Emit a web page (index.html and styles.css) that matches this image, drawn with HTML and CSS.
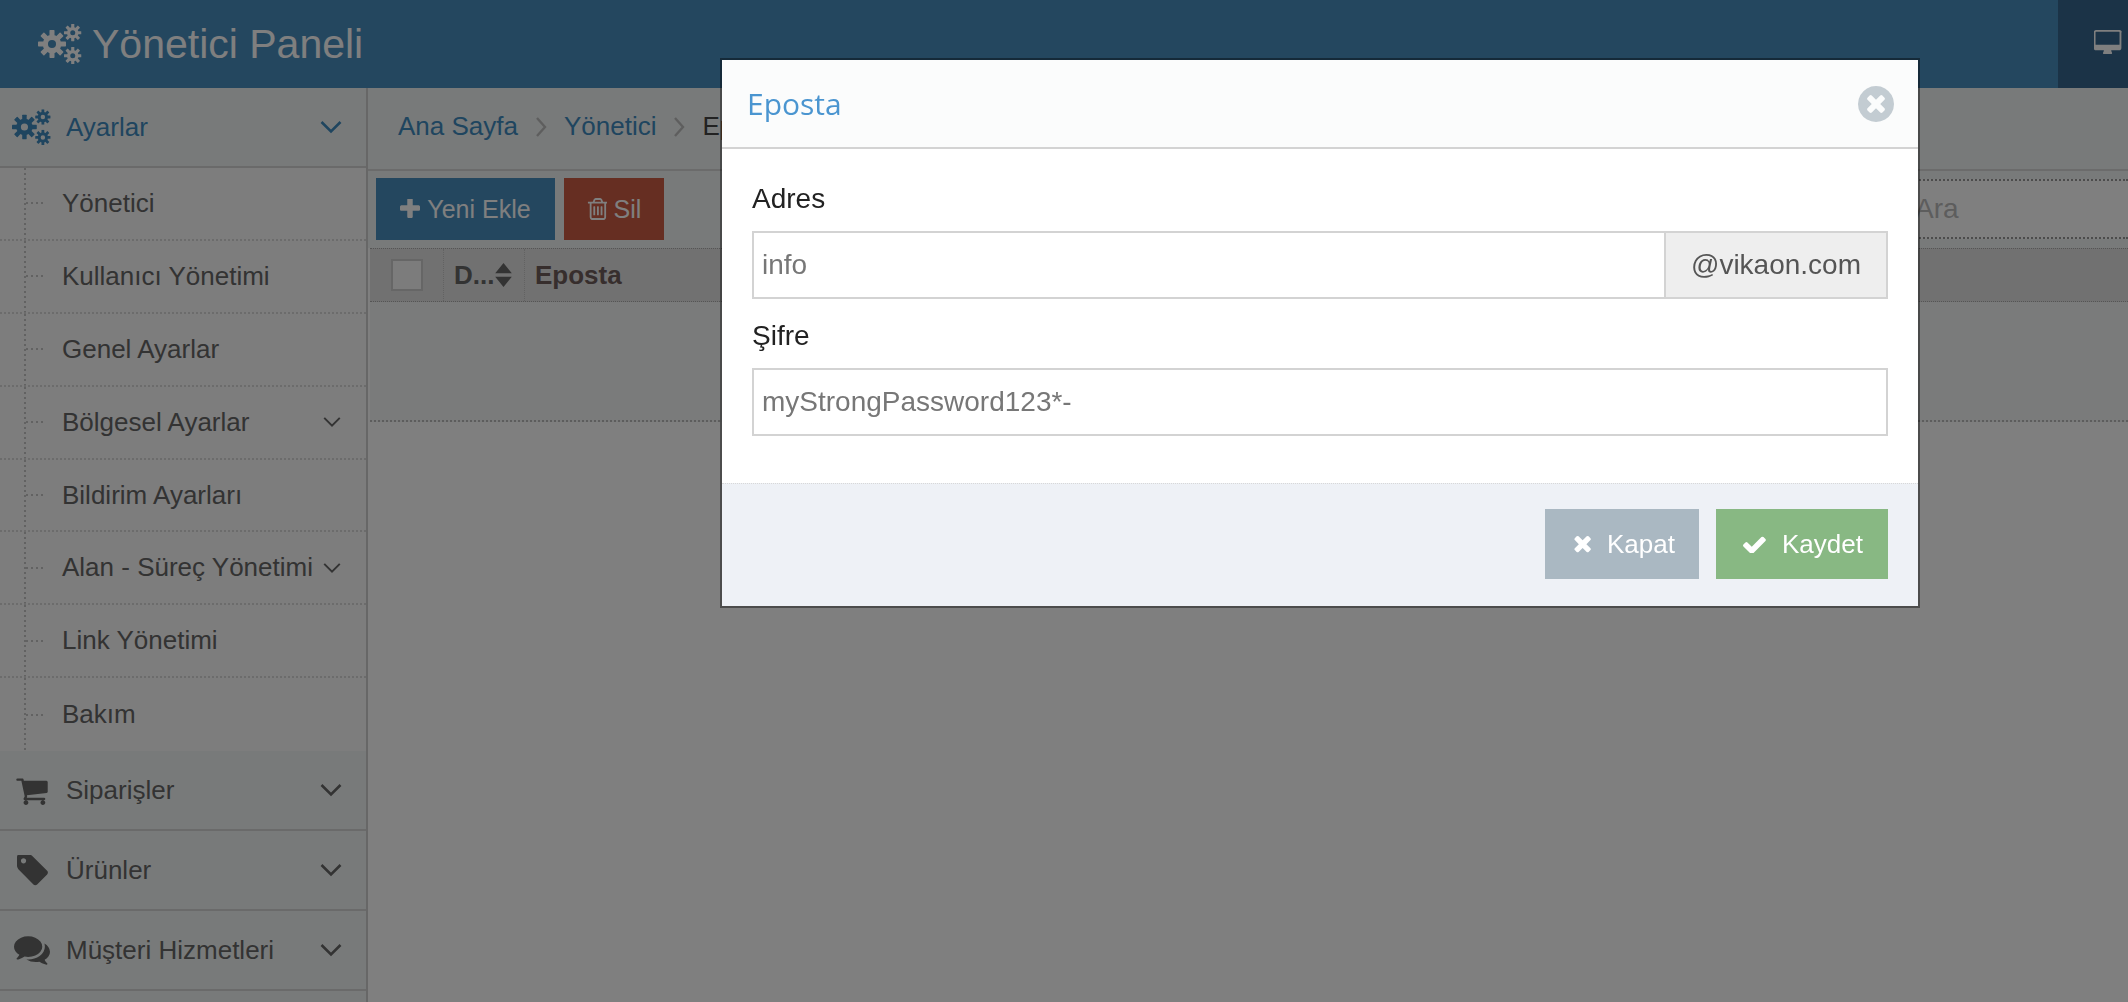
FILE: index.html
```html
<!DOCTYPE html>
<html lang="tr">
<head>
<meta charset="utf-8">
<title>Yönetici Paneli</title>
<link rel="stylesheet" href="styles.css">
</head>
<body>
<svg class="defs" aria-hidden="true">
  <defs>
    <symbol id="gear" viewBox="-20 -20 40 40">
      <circle class="gear-ring" r="9.5"/>
      <g class="gear-teeth">
        <rect x="-3.6" y="-20" width="7.2" height="9" rx="1"/>
        <rect x="-3.6" y="-20" width="7.2" height="9" rx="1" transform="rotate(45)"/>
        <rect x="-3.6" y="-20" width="7.2" height="9" rx="1" transform="rotate(90)"/>
        <rect x="-3.6" y="-20" width="7.2" height="9" rx="1" transform="rotate(135)"/>
        <rect x="-3.6" y="-20" width="7.2" height="9" rx="1" transform="rotate(180)"/>
        <rect x="-3.6" y="-20" width="7.2" height="9" rx="1" transform="rotate(225)"/>
        <rect x="-3.6" y="-20" width="7.2" height="9" rx="1" transform="rotate(270)"/>
        <rect x="-3.6" y="-20" width="7.2" height="9" rx="1" transform="rotate(315)"/>
      </g>
    </symbol>
    <symbol id="cogs" viewBox="0 0 45 40">
      <use href="#gear" x="0" y="6" width="28" height="28"/>
      <use href="#gear" x="26" y="0" width="17.5" height="17.5"/>
      <use href="#gear" x="26" y="23" width="17.5" height="17.5"/>
    </symbol>
    <symbol id="chev" viewBox="0 0 22 14">
      <polyline points="1.5,2 11,11.5 20.5,2"/>
    </symbol>
    <symbol id="times" viewBox="200 300 1300 1300">
      <path d="M1490 1322q0 40-28 68l-136 136q-28 28-68 28t-68-28l-294-294-294 294q-28 28-68 28t-68-28l-136-136q-28-28-28-68t28-68l294-294-294-294q-28-28-28-68t28-68l136-136q28-28 68-28t68 28l294 294 294-294q28-28 68-28t68 28l136 136q28 28 28 68t-28 68l-294 294 294 294q28 28 28 68z"/>
    </symbol>
  </defs>
</svg>

<header class="topbar">
  <div class="brand">
    <svg class="brand-icon"><use href="#cogs"/></svg>
    <span>Yönetici Paneli</span>
  </div>
  <div class="top-action">
    <svg class="desktop-icon" viewBox="0 0 1856 1664"><path fill-rule="evenodd" d="M1728 992v-832q0-13-9.5-22.5t-22.5-9.5h-1600q-13 0-22.5 9.5t-9.5 22.5v832q0 13 9.5 22.5t22.5 9.5h1600q13 0 22.5-9.5t9.5-22.5zm128-832v1088q0 66-47 113t-113 47h-544q0 37 16 77.5t32 71 16 43.5q0 26-19 45t-45 19h-512q-26 0-45-19t-19-45q0-14 16-44t32-70 16-78h-544q-66 0-113-47t-47-113v-1088q0-66 47-113t113-47h1632q66 0 113 47t47 113z"/></svg>
  </div>
</header>

<div class="layout">
  <nav class="sidebar">
    <div class="nav-head nav-head-active">
      <span class="nav-icon"><svg class="cogs-small"><use href="#cogs"/></svg></span>
      <span class="nav-label">Ayarlar</span>
      <svg class="chev"><use href="#chev"/></svg>
    </div>
    <ul class="subnav">
      <li class="subitem"><span>Yönetici</span></li>
      <li class="subitem"><span>Kullanıcı Yönetimi</span></li>
      <li class="subitem"><span>Genel Ayarlar</span></li>
      <li class="subitem"><span>Bölgesel Ayarlar</span><svg class="chev chev-sm"><use href="#chev"/></svg></li>
      <li class="subitem"><span>Bildirim Ayarları</span></li>
      <li class="subitem"><span>Alan - Süreç Yönetimi</span><svg class="chev chev-sm"><use href="#chev"/></svg></li>
      <li class="subitem"><span>Link Yönetimi</span></li>
      <li class="subitem"><span>Bakım</span></li>
    </ul>
    <div class="nav-head">
      <span class="nav-icon"><svg class="ic-cart" viewBox="64 128 1664 1536"><path d="M704 1536q0 52-38 90t-90 38-90-38-38-90 38-90 90-38 90 38 38 90zm896 0q0 52-38 90t-90 38-90-38-38-90 38-90 90-38 90 38 38 90zm128-1088v512q0 24-16.5 42.5t-40.5 21.5l-1044 122q13 60 13 70 0 16-24 64h920q26 0 45 19t19 45-19 45-45 19h-1024q-26 0-45-19t-19-45q0-11 8-31.5t16-36 21.5-40 15.5-29.5l-177-823h-204q-26 0-45-19t-19-45 19-45 45-19h256q16 0 28.5 6.5t19.5 15.5 13 24.5 8 26 5.5 29.5 4.5 26h1201q26 0 45 19t19 45z"/></svg></span>
      <span class="nav-label">Siparişler</span>
      <svg class="chev"><use href="#chev"/></svg>
    </div>
    <div class="nav-head">
      <span class="nav-icon"><svg class="ic-tag" viewBox="128 192 1520 1460"><path d="M576 448q0-53-37.5-90.5t-90.5-37.5-90.5 37.5-37.5 90.5 37.5 90.5 90.5 37.5 90.5-37.5 37.5-90.5zm1067 576q0 53-37 90l-491 492q-39 37-91 37-53 0-90-37l-715-716q-38-37-64.5-101t-26.5-117v-416q0-52 38-90t90-38h416q53 0 117 26.5t102 64.5l715 714q37 39 37 91z"/></svg></span>
      <span class="nav-label">Ürünler</span>
      <svg class="chev"><use href="#chev"/></svg>
    </div>
    <div class="nav-head">
      <span class="nav-icon"><svg class="ic-comments" viewBox="0 256 1792 1408"><path d="M1408 768q0 139-94 257t-256.500 186.500-353.500 68.500q-86 0-176-16-124 88-278 128-36 9-86 16h-3q-11 0-20.500-8t-11.500-21q-1-3-1-6.500t.5-6.500 2-6l2.500-5 3.500-5.500 4-5 4.500-5 4-4.500q5-6 23-25t26-29.500 22.500-29 25-38.500 20.500-44q-124-72-195-177t-71-224q0-139 94-257t256.500-186.500 353.500-68.500 353.500 68.500 256.500 186.500 94 257zm384 256q0 120-71 224.500t-195 176.500q10 24 20.500 44t25 38.500 22.500 29 26 29.500 23 25q1 1 4 4.500t4.500 5 4 5 3.500 5.500l2.500 5 2 6 .5 6.500-1 6.500q-3 14-13 22t-22 7q-50-7-86-16-154-40-278-128-90 16-176 16-271 0-472-132 58 4 88 4 161 0 309-45t264-129q125-92 192-212t67-254q0-77-23-152 129 71 204 178t75 230z"/></svg></span>
      <span class="nav-label">Müşteri Hizmetleri</span>
      <svg class="chev"><use href="#chev"/></svg>
    </div>
    <div class="nav-head"></div>
  </nav>

  <main class="content">
    <div class="crumbs">
      <a class="crumb">Ana Sayfa</a>
      <svg class="crumb-sep" viewBox="0 0 12 22"><polyline points="2,2 10,11 2,20"/></svg>
      <a class="crumb">Yönetici</a>
      <svg class="crumb-sep" viewBox="0 0 12 22"><polyline points="2,2 10,11 2,20"/></svg>
      <span class="crumb-current">Eposta</span>
    </div>
    <div class="toolbar">
      <button class="btn btn-blue">
        <svg class="ic-plus" viewBox="192 192 1408 1408"><path d="M1600 736v192q0 40-28 68t-68 28h-416v416q0 40-28 68t-68 28h-192q-40 0-68-28t-28-68v-416h-416q-40 0-68-28t-28-68v-192q0-40 28-68t68-28h416v-416q0-40 28-68t68-28h192q40 0 68 28t28 68v416h416q40 0 68 28t28 68z"/></svg>
        Yeni Ekle
      </button>
      <button class="btn btn-red">
        <svg class="ic-trash" viewBox="128 128 1408 1536"><path d="M704 736v576q0 14-9 23t-23 9h-64q-14 0-23-9t-9-23v-576q0-14 9-23t23-9h64q14 0 23 9t9 23zm256 0v576q0 14-9 23t-23 9h-64q-14 0-23-9t-9-23v-576q0-14 9-23t23-9h64q14 0 23 9t9 23zm256 0v576q0 14-9 23t-23 9h-64q-14 0-23-9t-9-23v-576q0-14 9-23t23-9h64q14 0 23 9t9 23zm128 724v-948h-896v948q0 22 7 40.500t14.500 27 10.500 8.500h832q3 0 10.500-8.500t14.500-27 7-40.500zm-672-1076h448l-48-117q-7-9-17-11h-317q-10 2-17 11zm928 32v64q0 14-9 23t-23 9h-96v948q0 83-47 143.500t-113 60.500h-832q-66 0-113-59t-47-142v-952h-96q-14 0-23-9t-9-23v-64q0-14 9-23t23-9h309l70-167q15-37 54-63t79-26h320q40 0 79 26t54 63l70 167h309q14 0 23 9t9 23z"/></svg>
        Sil
      </button>
      <div class="search">Ara</div>
    </div>
    <div class="table-head">
      <div class="cell cell-check"><span class="checkbox"></span></div>
      <div class="cell cell-d">D...<svg class="ic-sort" viewBox="0 0 18 26"><path d="M9 0l9 11H0zM9 26L0 15h18z"/></svg></div>
      <div class="cell cell-mail">Eposta</div>
    </div>
    <div class="table-body"></div>
  </main>
</div>

<div class="backdrop">
  <section class="modal">
    <header class="modal-head">
      <h2 class="modal-title">Eposta</h2>
      <svg class="modal-close" viewBox="128 128 1536 1536"><path d="M1277 1122q0-26-19-45l-181-181 181-181q19-19 19-45 0-27-19-46l-90-90q-19-19-46-19-26 0-45 19l-181 181-181-181q-19-19-45-19-27 0-46 19l-90 90q-19 19-19 46 0 26 19 45l181 181-181 181q-19 19-19 45 0 27 19 46l90 90q19 19 46 19 26 0 45-19l181-181 181 181q19 19 45 19 27 0 46-19l90-90q19-19 19-46zm387-226q0 209-103 385.500t-279.500 279.500-385.500 103-385.500-103-279.500-279.500-103-385.500 103-385.500 279.500-279.500 385.500-103 385.500 103 279.500 279.500 103 385.500z"/></svg>
    </header>
    <div class="modal-body">
      <div class="field">
        <label class="field-label">Adres</label>
        <div class="input-group">
          <input class="input" type="text" value="info">
          <span class="addon">@vikaon.com</span>
        </div>
      </div>
      <div class="field">
        <label class="field-label">Şifre</label>
        <div class="input-group">
          <input class="input" type="text" value="myStrongPassword123*-">
        </div>
      </div>
    </div>
    <footer class="modal-foot">
      <button class="action action-grey"><svg class="ic-action ic-x"><use href="#times"/></svg>Kapat</button>
      <button class="action action-green">
        <svg class="ic-action ic-check" viewBox="120 300 1560 1130"><path d="M1671 566q0 40-28 68l-724 724-136 136q-28 28-68 28t-68-28l-136-136-362-362q-28-28-28-68t28-68l136-136q28-28 68-28t68 28l294 295 656-657q28-28 68-28t68 28l136 136q28 28 28 68z"/></svg>Kaydet
      </button>
    </footer>
  </section>
</div>
</body>
</html>
```

FILE: styles.css
```css
* { box-sizing: border-box; }
html, body { height: 100%; }
body {
  margin: 0;
  overflow: hidden;
  background: #fff;
  color: #666;
  font-family: "Liberation Sans", Arial, sans-serif;
  font-size: 26px;
}
.defs { width: 0; height: 0; display: block; overflow: hidden; }
.gear-ring { fill: none; stroke: currentColor; stroke-width: 7.5; }
.gear-teeth { fill: currentColor; }
#chev polyline, .chev polyline { fill: none; }

/* top bar */
.topbar {
  height: 88px;
  display: flex;
  justify-content: space-between;
  background: #488ebe;
  color: #fff;
}
.brand {
  display: flex;
  align-items: center;
  gap: 9px;
  padding-left: 38px;
  font-size: 41px;
  color: #fff;
}
.brand-icon { width: 45px; height: 40px; color: #fff; }
.top-action {
  width: 70px;
  display: flex;
  padding: 30px 0 0 36px;
  background: #36668e;
}
.desktop-icon { width: 28px; height: 24px; fill: #fff; }

/* layout */
.layout { display: flex; height: 914px; }
.sidebar {
  width: 368px;
  flex: none;
  background: #fafafa;
  border-right: 2px solid #cfcfcf;
  overflow: hidden;
}
.nav-head {
  height: 80px;
  display: flex;
  align-items: center;
  padding-left: 10px;
  padding-right: 24px;
  background: #f1f5f4;
  border-bottom: 2px solid #d4d4d4;
  color: #666;
  fill: #666;
  stroke: none;
}
.nav-head-active { color: #3f8abf; fill: #3f8abf; }
.nav-icon {
  width: 44px;
  display: flex;
  justify-content: center;
  align-items: center;
  margin-right: 12px;
}
.nav-label { flex: 1; }
.cogs-small { width: 40px; height: 36px; }
.ic-cart { width: 34px; height: 29px; }
.ic-tag { width: 31px; height: 31px; }
.ic-comments { width: 36px; height: 29px; }
.chev {
  width: 22px;
  height: 14px;
  flex: none;
  fill: none;
  stroke: currentColor;
  stroke-width: 2.6;
}
.subnav { list-style: none; margin: 0; padding: 0; }
.subitem {
  height: 72.9px;
  display: flex;
  align-items: center;
  justify-content: space-between;
  padding: 0 25px 0 62px;
  border-bottom: 2px dotted #d8d8d8;
  background:
    linear-gradient(#bcbcbc, #bcbcbc) 25px 0 / 2px 100% no-repeat;
  background-image:
    repeating-linear-gradient(180deg, #c4c4c4 0 2px, transparent 2px 5px),
    repeating-linear-gradient(90deg, #c4c4c4 0 2px, transparent 2px 5px);
  background-size: 2px 100%, 18px 2px;
  background-position: 24px 0, 26px 50%;
  background-repeat: no-repeat;
}
.subitem:last-child { border-bottom: 0; }
.chev-sm { width: 18px; height: 12px; stroke-width: 2.4; }

/* content */
.content { flex: 1; min-width: 0; }
.crumbs {
  height: 83px;
  display: flex;
  align-items: center;
  gap: 15px;
  padding: 0 0 4px 30px;
  background: #f0f5f4;
  border-bottom: 2px solid #d6d6d6;
}
.crumb { color: #3f8abf; }
.crumb-current { color: #444; }
.crumb-sep {
  width: 12px;
  height: 22px;
  margin: 0 2px;
  fill: none;
  stroke: #bdbdbd;
  stroke-width: 2.4;
}
.toolbar {
  height: 77px;
  display: flex;
  align-items: flex-start;
  gap: 9px;
  padding: 7px 0 0 8px;
  background: #f0f5f4;
}
.btn {
  height: 62px;
  display: flex;
  align-items: center;
  justify-content: center;
  border: 0;
  color: #fff;
  fill: #fff;
  font: 25px "Liberation Sans", Arial, sans-serif;
}
.btn-blue { width: 179px; background: #488ebe; gap: 7px; }
.btn-red { width: 100px; background: #cc5c44; gap: 7px; }
.ic-plus { width: 20px; height: 20px; }
.ic-trash { width: 20px; height: 22px; }
.search {
  margin-left: auto;
  width: 228px;
  height: 60px;
  margin-top: 1px;
  display: flex;
  align-items: center;
  padding-left: 13px;
  background: #fff;
  border-top: 2px dotted #999;
  border-bottom: 2px dotted #999;
  border-left: 2px dotted #ccc;
  color: #bbb;
  font-size: 28px;
}
.table-head {
  height: 54px;
  margin-left: 2px;
  display: flex;
  align-items: stretch;
  background: #e3e3e3;
  border-top: 1px dotted #aaa;
  border-bottom: 1px dotted #aaa;
  color: #666;
  font-weight: bold;
  font-size: 26px;
}
.cell {
  display: flex;
  align-items: center;
  border-right: 1px dotted #c4c4c4;
}
.cell-check { width: 74px; padding-left: 21px; }
.checkbox {
  width: 32px;
  height: 32px;
  background: #f8f8f8;
  border: 2px solid #cdcdcd;
}
.cell-d { width: 81px; padding-left: 10px; gap: 1px; }
.cell-mail { flex: 1; padding-left: 10px; border-right: 0; color: #6e5c5a; }
.ic-sort { width: 17px; height: 24px; fill: #666; }
.table-body {
  height: 120px;
  margin-left: 2px;
  background: #f5f7f7;
  border-bottom: 2px dotted #bbb;
}

/* modal */
.backdrop {
  position: fixed;
  inset: 0;
  padding: 60px 0 0 722px;
  background: rgba(0, 0, 0, 0.5);
}
.modal {
  width: 1196px;
  background: #fff;
  box-shadow: 0 0 0 2px rgba(0, 0, 0, 0.4);
  color: #222;
}
.modal-head {
  height: 89px;
  display: flex;
  align-items: center;
  justify-content: space-between;
  padding: 0 24px 0 25px;
  background: #fbfcfc;
  border-bottom: 2px solid #d3d3d3;
}
.modal-title {
  margin: 0;
  font: 400 30px "Open Sans", sans-serif;
  color: #4a95d0;
}
.modal-close { width: 36px; height: 36px; fill: #c3ccd2; }
.modal-body { padding: 30px 30px 47px; }
.field { margin-bottom: 17px; }
.field:last-child { margin-bottom: 0; }
.field-label {
  display: block;
  height: 40px;
  margin-bottom: 12px;
  line-height: 40px;
  font-size: 28px;
  color: #222;
}
.input-group { display: flex; height: 68px; }
.input {
  flex: 1;
  min-width: 0;
  height: 68px;
  padding: 0 8px;
  border: 2px solid #d3d3d3;
  background: #fff;
  color: #777;
  font: 28px "Liberation Sans", Arial, sans-serif;
  outline: 0;
}
.addon {
  width: 222px;
  display: flex;
  align-items: center;
  justify-content: center;
  background: #eee;
  border: 2px solid #d3d3d3;
  border-left: 0;
  color: #555;
  font-size: 28px;
}
.modal-foot {
  height: 123px;
  display: flex;
  justify-content: flex-end;
  gap: 17px;
  padding: 25px 30px 0;
  background: #eef1f6;
  border-top: 1px dotted #d8d8d8;
}
.action {
  height: 70px;
  display: flex;
  align-items: center;
  border: 0;
  color: #fff;
  fill: #fff;
  font: 26px "Liberation Sans", Arial, sans-serif;
}
.action-grey { width: 154px; padding-left: 28px; gap: 16px; background: #aab8c2; }
.action-green { width: 172px; padding-left: 27px; gap: 16px; background: #88b883; }
.ic-action { flex: none; }
.ic-x { width: 18px; height: 18px; }
.ic-check { width: 23px; height: 17px; }
```
